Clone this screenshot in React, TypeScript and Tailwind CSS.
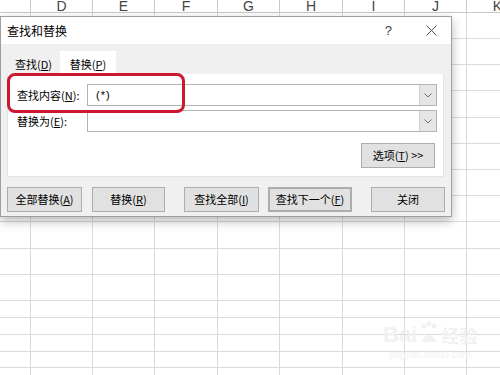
import React from "react";

const letters = ["", "D", "E", "F", "G", "H", "I", "J", "K"];
const rowCount = 17;

function Grid() {
  const cells: React.ReactNode[] = [];
  for (let r = 0; r < rowCount; r++) {
    for (let c = 0; c < letters.length; c++) {
      cells.push(
        <div
          key={`${r}-${c}`}
          className={
            r === 0
              ? "border-r border-b border-[#c8c8c8] overflow-hidden flex items-end justify-center text-[14px] leading-[12px] text-[#444] font-['Liberation_Sans',sans-serif]"
              : "border-r border-b border-[#dadada]"
          }
        >
          {r === 0 ? letters[c] : null}
        </div>
      );
    }
  }
  return (
    <div className="grid grid-cols-[31px_62px_62px_63px_62px_63px_62px_62px_62px] grid-rows-[13px_26px_26px_26px_27px_26px_26px_26px_26px_27px_26px_26px_17px_17px_17px_16px_20px]">
      {cells}
    </div>
  );
}

function Btn({ children, className = "" }: { children: React.ReactNode; className?: string }) {
  return (
    <div
      className={
        "h-[25px] flex items-center justify-center bg-[#e1e1e1] border border-[#adadad] text-[11px] text-black " +
        className
      }
    >
      {children}
    </div>
  );
}

function Combo() {
  return (
    <div className="flex h-[22px] w-[350px] border border-[#b4b4b4] bg-white">
      <div className="flex-1" />
      <div className="w-[17px] bg-[#e6e6e6] border-l border-[#d0d0d0] flex items-center justify-center">
        <svg width="8" height="5" viewBox="0 0 8 5">
          <path d="M0.5 0.5 L4 4 L7.5 0.5" stroke="#707070" strokeWidth="1" fill="none" />
        </svg>
      </div>
    </div>
  );
}

function Dialog() {
  return (
    <div className="absolute left-0 top-[16px] w-[452px] h-[201px] border border-[#9e9e9e] bg-[#f0f0f0] shadow-[0_4px_10px_rgba(0,0,0,0.28)] flex flex-col font-['Noto_Sans_CJK_SC','Noto_Sans',sans-serif] text-black">
      {/* title bar */}
      <div className="h-[27px] bg-white flex items-center pl-[6px] pr-[14px] shrink-0">
        <span className="text-[12px]">查找和替换</span>
        <div className="flex-1" />
        <span className="text-[13px] text-[#444] mr-[34px] font-['Liberation_Sans',sans-serif]">?</span>
        <svg width="11" height="11" viewBox="0 0 11 11">
          <path d="M0.5 0.5 L10.5 10.5 M10.5 0.5 L0.5 10.5" stroke="#555" strokeWidth="1" />
        </svg>
      </div>
      {/* body */}
      <div className="relative flex-1 px-[6px] pt-[7px]">
        {/* tabs */}
        <div className="flex h-[23px] text-[11px]">
          <div className="w-[53px] flex items-center justify-center pt-[3px]">
            查找(<u>D</u>)
          </div>
          <div className="w-[56px] bg-white flex items-center justify-center pt-[3px]">
            替换(<u>P</u>)
          </div>
        </div>
        {/* panel */}
        <div className="w-[437px] h-[103px] bg-white border border-[#e3e3e3] border-t-0 pt-[10px] pl-[9px] text-[11px] flex flex-col">
          <div className="flex items-center">
            <div className="w-[70px]">
              查找内容(<u>N</u>):
            </div>
            <div className="relative">
              <Combo />
              <div className="absolute left-[9px] top-[3px] text-[11px] tracking-[1px] font-['Liberation_Sans',sans-serif]">
                (*)
              </div>
            </div>
          </div>
          <div className="flex items-center mt-[4px]">
            <div className="w-[70px]">
              替换为(<u>E</u>):
            </div>
            <Combo />
          </div>
          <div className="flex justify-end pr-[8px] mt-[11px]">
            <Btn className="w-[74px]">
              选项(<u>T</u>) &gt;&gt;
            </Btn>
          </div>
        </div>
        {/* buttons */}
        <div className="flex mt-[10px]">
          <Btn className="w-[75px]">
            全部替换(<u>A</u>)
          </Btn>
          <Btn className="w-[73px] ml-[10px]">
            替换(<u>R</u>)
          </Btn>
          <Btn className="w-[75px] ml-[19px]">
            查找全部(<u>I</u>)
          </Btn>
          <Btn className="w-[84px] ml-[9px] border-2 border-[#3b8ddd]">
            查找下一个(<u>F</u>)
          </Btn>
          <Btn className="w-[74px] ml-[19px]">关闭</Btn>
        </div>
        {/* red highlight */}
        <div className="absolute left-[6px] top-[29px] w-[178px] h-[40px] border-[3px] border-[#cc1730] rounded-[8px]" />
      </div>
    </div>
  );
}

function Watermark() {
  return (
    <div className="absolute left-[383px] top-[320px] flex flex-col items-center text-[#f1f1f1]">
      <div className="flex items-end">
        <span className="text-[22px] font-bold leading-[22px] font-['Liberation_Sans',sans-serif]">Bai</span>
        <svg width="22" height="26" viewBox="0 0 22 26" className="mx-[1px]">
          <circle cx="6" cy="6" r="2.5" fill="#f1f1f1" />
          <circle cx="11" cy="3.5" r="2.5" fill="#f1f1f1" />
          <circle cx="16" cy="6" r="2.5" fill="#f1f1f1" />
          <path d="M3 22 Q11 8 19 22 Z" fill="#f1f1f1" />
        </svg>
        <span className="text-[18px] font-bold leading-[22px] font-['Noto_Sans_CJK_SC',sans-serif]">经验</span>
      </div>
      <span className="text-[10px] leading-[12px] mt-[3px] font-['Liberation_Sans',sans-serif]">jingyan.baidu.com</span>
    </div>
  );
}

export default function App() {
  return (
    <div className="relative w-[500px] h-[375px] overflow-hidden bg-white">
      <Grid />
      <Watermark />
      <Dialog />
    </div>
  );
}
